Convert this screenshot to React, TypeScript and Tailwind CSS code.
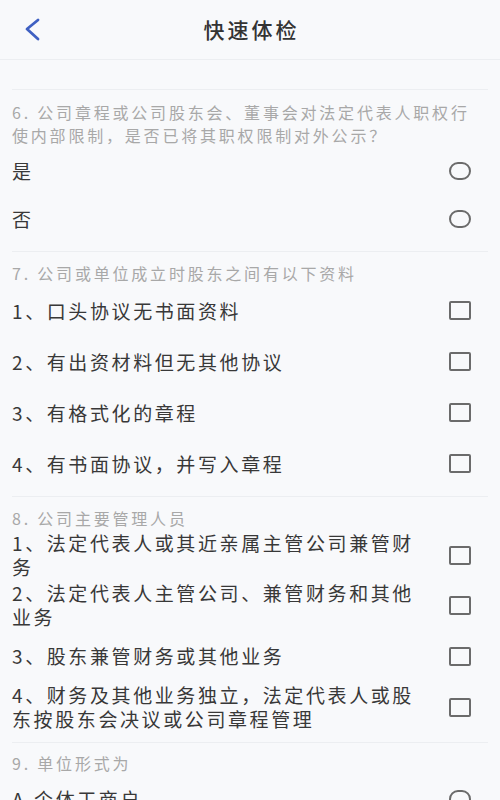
import React from 'react'

type Item = { label: string }

const font = { fontFamily: '"Noto Sans CJK SC", "Noto Sans", sans-serif' }

function Radio() {
  return <span className="block w-[22px] h-[18px] rounded-full border-2 border-[#6b6b6b] shrink-0" />
}

function Checkbox() {
  return <span className="block w-[22px] h-[19px] rounded-[2px] border-2 border-[#6b6b6b] shrink-0" />
}

function Heading({ children, top = 'pt-[9px]' }: { children: React.ReactNode; top?: string }) {
  return (
    <p className={`${top} pl-3 pr-4 text-[16px] leading-[24px] tracking-[2.8px] text-[#a8a8a8]`}>{children}</p>
  )
}

function OptionRow({ label, kind, height }: { label: string; kind: 'radio' | 'check'; height: string }) {
  return (
    <div className={`flex items-center justify-between pl-3 pr-[29px] ${height}`}>
      <span className="w-[420px] text-[19px] leading-[24px] tracking-[2.6px] text-[#383838]">{label}</span>
      {kind === 'radio' ? <Radio /> : <Checkbox />}
    </div>
  )
}

const q7: Item[] = [
  { label: '1、口头协议无书面资料' },
  { label: '2、有出资材料但无其他协议' },
  { label: '3、有格式化的章程' },
  { label: '4、有书面协议，并写入章程' },
]

const q8: Item[] = [
  { label: '1、法定代表人或其近亲属主管公司兼管财务' },
  { label: '2、法定代表人主管公司、兼管财务和其他业务' },
  { label: '3、股东兼管财务或其他业务' },
  { label: '4、财务及其他业务独立，法定代表人或股东按股东会决议或公司章程管理' },
]

export default function App() {
  return (
    <div className="w-[500px] h-[800px] overflow-hidden bg-[#f8f9fb] [text-spacing-trim:space-all]" style={font}>
      <header className="h-[60px] grid grid-cols-[60px_1fr_60px] items-center border-b border-[#eceef1]">
        <button className="flex items-center pl-[24px] h-full">
          <svg width="18" height="24" viewBox="0 0 18 24" fill="none">
            <path d="M14 2 L3 11 L14 21" stroke="#3f60c2" strokeWidth="2.8" strokeLinecap="round" strokeLinejoin="round" />
          </svg>
        </button>
        <h1 className="text-center text-[21px] tracking-[3px] font-medium text-[#333] pl-[3px]">快速体检</h1>
        <span />
      </header>

      <div className="h-[30px] mx-3 border-b border-[#eceef1]" />

      <section>
        <Heading top="pt-[11px]">
          <span className="block leading-[23px]">6. 公司章程或公司股东会、董事会对法定代表人职权行使内部限制，是否已将其职权限制对外公示？</span>
        </Heading>
        <OptionRow label="是" kind="radio" height="h-[48px]" />
        <OptionRow label="否" kind="radio" height="h-[48px]" />
        <div className="h-[9px] mx-3 border-b border-[#eceef1]" />
      </section>

      <section>
        <Heading>7. 公司或单位成立时股东之间有以下资料</Heading>
        {q7.map((it) => (
          <OptionRow key={it.label} label={it.label} kind="check" height="h-[51px]" />
        ))}
        <div className="h-[8px] mx-3 border-b border-[#eceef1]" />
      </section>

      <section>
        <Heading>8. 公司主要管理人员</Heading>
        {q8.map((it, i) => (
          <OptionRow key={it.label} label={it.label} kind="check" height={i === 2 ? 'h-[52px]' : 'min-h-[50px] py-px'} />
        ))}
        <div className="h-[11px] mx-3 border-b border-[#eceef1]" />
      </section>

      <section>
        <Heading top="pt-[8px]">9. 单位形式为</Heading>
        <OptionRow label="A.个体工商户" kind="radio" height="h-[48px]" />
        <OptionRow label="B.有限责任公司" kind="radio" height="h-[48px]" />
      </section>
    </div>
  )
}
